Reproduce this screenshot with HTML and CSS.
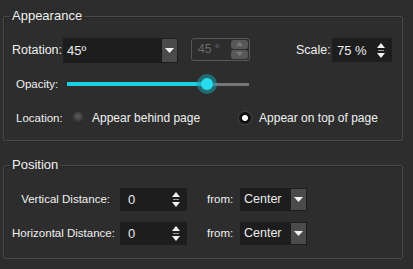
FILE: index.html
```html
<!DOCTYPE html>
<html lang="en">
  <head>
    <meta charset="UTF-8" />
    <title>Watermark Options</title>
    <link rel="stylesheet" href="styles.css">
  </head>
  <body>
    <!-- Appearance -->
    <fieldset class="group appearance">
      <legend>Appearance</legend>

      <div class="row rotation-row">
        <span class="label big rotation-label">Rotation:</span>
        <div class="combo rotation-combo">
          <span class="value">45º</span>
          <span class="drop-btn">
            <svg width="9" height="5" viewBox="0 0 9 5"><path d="M0 0h9L4.5 5z" fill="#f2f2f2"/></svg>
          </span>
        </div>
        <div class="spin-disabled">
          <span class="value">45 °</span>
          <div class="spin-btns">
            <span class="spin-btn"><svg width="7" height="4" viewBox="0 0 7 4"><path d="M0 4h7L3.5 0z" fill="#7a7a7a"/></svg></span>
            <span class="spin-btn"><svg width="7" height="4" viewBox="0 0 7 4"><path d="M0 0h7L3.5 4z" fill="#7a7a7a"/></svg></span>
          </div>
        </div>
        <span class="label big scale-label">Scale:</span>
        <div class="spinbox scale-box">
          <span class="value">75 %</span>
          <svg class="arrows" width="8" height="15" viewBox="0 0 8 15"><path d="M0 5h8L4 0z M0 10h8L4 15z" fill="#f2f2f2"/><path d="M1 7.5h6" stroke="#9a9a9a" stroke-width="1"/></svg>
        </div>
      </div>

      <div class="row opacity-row">
        <span class="label opacity-label">Opacity:</span>
        <div class="slider">
          <div class="groove"></div>
          <div class="fill" style="width: 77%"></div>
          <div class="thumb" style="left: 77%"></div>
        </div>
      </div>

      <div class="row location-row">
        <span class="label location-label">Location:</span>
        <label class="option">
          <span class="radio"></span>
          <span>Appear behind page</span>
        </label>
        <label class="option option-top">
          <span class="radio checked"></span>
          <span>Appear on top of page</span>
        </label>
      </div>
    </fieldset>

    <!-- Position -->
    <fieldset class="group position">
      <legend>Position</legend>

      <div class="row dist-row">
        <span class="label dist-label">Vertical Distance:</span>
        <div class="spinbox dist-box">
          <span class="value">0</span>
          <svg class="arrows" width="8" height="15" viewBox="0 0 8 15"><path d="M0 5h8L4 0z M0 10h8L4 15z" fill="#f2f2f2"/><path d="M1 7.5h6" stroke="#9a9a9a" stroke-width="1"/></svg>
        </div>
        <span class="label from-label">from:</span>
        <div class="combo from-combo">
          <span class="value">Center</span>
          <span class="drop-btn">
            <svg width="9" height="5" viewBox="0 0 9 5"><path d="M0 0h9L4.5 5z" fill="#f2f2f2"/></svg>
          </span>
        </div>
      </div>

      <div class="row dist-row">
        <span class="label dist-label">Horizontal Distance:</span>
        <div class="spinbox dist-box">
          <span class="value">0</span>
          <svg class="arrows" width="8" height="15" viewBox="0 0 8 15"><path d="M0 5h8L4 0z M0 10h8L4 15z" fill="#f2f2f2"/><path d="M1 7.5h6" stroke="#9a9a9a" stroke-width="1"/></svg>
        </div>
        <span class="label from-label">from:</span>
        <div class="combo from-combo">
          <span class="value">Center</span>
          <span class="drop-btn">
            <svg width="9" height="5" viewBox="0 0 9 5"><path d="M0 0h9L4.5 5z" fill="#f2f2f2"/></svg>
          </span>
        </div>
      </div>
    </fieldset>
  </body>
</html>
```

FILE: styles.css
```css
/* Genel */
body {
  margin: 0;
  padding: 8px 0 0 3px;
  background-color: #2d2d2d;
  color: #ececec;
  font-family: "Liberation Sans", Arial, sans-serif;
  font-size: 12px;
  width: 400px;
}

.group {
  margin: 0;
  border: 1px solid #494949;
  border-radius: 2px;
  box-shadow: 1px 1px 0 #262626, inset 1px 1px 0 #262626;
  padding: 13px 0 9px 6px;
  box-sizing: border-box;
  width: 400px;
}

.group legend {
  padding: 0 2px;
  height: 16px;
  line-height: 16px;
  font-size: 13px;
  color: #f0f0f0;
}

.position {
  margin-top: 16px;
  padding-top: 14px;
  padding-bottom: 13px;
}

.row {
  display: flex;
  align-items: center;
}

.label {
  font-size: 11.5px;
  color: #f0f0f0;
  white-space: nowrap;
}

.label.big {
  font-size: 12.5px;
}

.value {
  white-space: nowrap;
}

/* Rotation satırı */
.rotation-row {
  height: 26px;
  padding-left: 2px;
}

.rotation-label {
  width: 51px;
}

.combo {
  display: flex;
  align-items: stretch;
  background-color: #1d1d1d;
  box-sizing: border-box;
}

.combo .value {
  flex: 1;
  display: flex;
  align-items: center;
  padding-left: 4px;
  font-size: 13px;
}

.drop-btn {
  width: 15px;
  margin: 1px;
  background-color: #4b4b4b;
  display: flex;
  align-items: center;
  justify-content: center;
}

.rotation-combo {
  width: 115px;
  height: 25px;
}

.spin-disabled {
  margin-left: 13px;
  width: 59px;
  height: 23px;
  box-sizing: border-box;
  border: 1px solid #575757;
  border-radius: 3px;
  display: flex;
  align-items: center;
  color: #6a6a6a;
  font-size: 12px;
  padding-left: 6px;
  margin-top: -2px;
}

.spin-disabled .value {
  flex: 1;
}

.spin-btns {
  display: flex;
  flex-direction: column;
  gap: 1px;
  margin-right: 1px;
}

.spin-btn {
  width: 17px;
  height: 9px;
  background-color: #585858;
  border-radius: 3px;
  display: flex;
  align-items: center;
  justify-content: center;
}

.scale-label {
  margin-left: 46px;
  width: 36px;
}

.spinbox {
  display: flex;
  align-items: center;
  background-color: #1d1d1d;
  box-sizing: border-box;
  padding: 0 7px 0 8px;
}

.spinbox .value {
  flex: 1;
  font-size: 13px;
}

.scale-box {
  width: 60px;
  height: 24px;
  padding-left: 5px;
}

/* Opacity */
.opacity-row {
  height: 26px;
  margin-top: 8px;
  padding-left: 6px;
}

.opacity-label {
  width: 51px;
}

.slider {
  position: relative;
  width: 182px;
  height: 20px;
}

.groove {
  position: absolute;
  left: 0;
  right: 0;
  top: 9px;
  height: 3px;
  background-color: #767676;
}

.fill {
  position: absolute;
  left: 0;
  top: 8px;
  height: 4px;
  background-color: #1ccfe2;
}

.thumb {
  position: absolute;
  top: 10px;
  width: 12px;
  height: 12px;
  margin: -6px 0 0 -6px;
  border-radius: 50%;
  background-color: #27dcef;
  box-shadow: 0 0 0 4px rgba(30, 160, 175, 0.55);
}

/* Location */
.location-row {
  height: 26px;
  margin-top: 8px;
  padding-left: 6px;
}

.location-label {
  width: 56px;
}

.option {
  display: flex;
  align-items: center;
  gap: 8px;
  font-size: 12px;
  color: #f0f0f0;
}

.option-top {
  margin-left: 39px;
}

.radio {
  width: 12px;
  height: 12px;
  border-radius: 50%;
  background: radial-gradient(circle at 50% 35%, #5c5c5c, #2a2a2a 70%, #1a1a1a);
  box-sizing: border-box;
}

.radio.checked {
  background: radial-gradient(circle, #ffffff 0, #ffffff 2.5px, #111 3.5px, #111 100%);
  box-shadow: 0 0 2px 1px #444;
}

/* Position */
.dist-row {
  height: 24px;
  padding-left: 2px;
}

.dist-row + .dist-row {
  margin-top: 10px;
}

.dist-label {
  width: 98px;
  text-align: right;
  margin-right: 10px;
}

.dist-box {
  width: 67px;
  height: 23px;
}

.from-label {
  margin-left: 20px;
  width: 33px;
}

.from-combo {
  width: 67px;
  height: 23px;
}

.from-combo .value {
  font-size: 12.5px;
}
```
